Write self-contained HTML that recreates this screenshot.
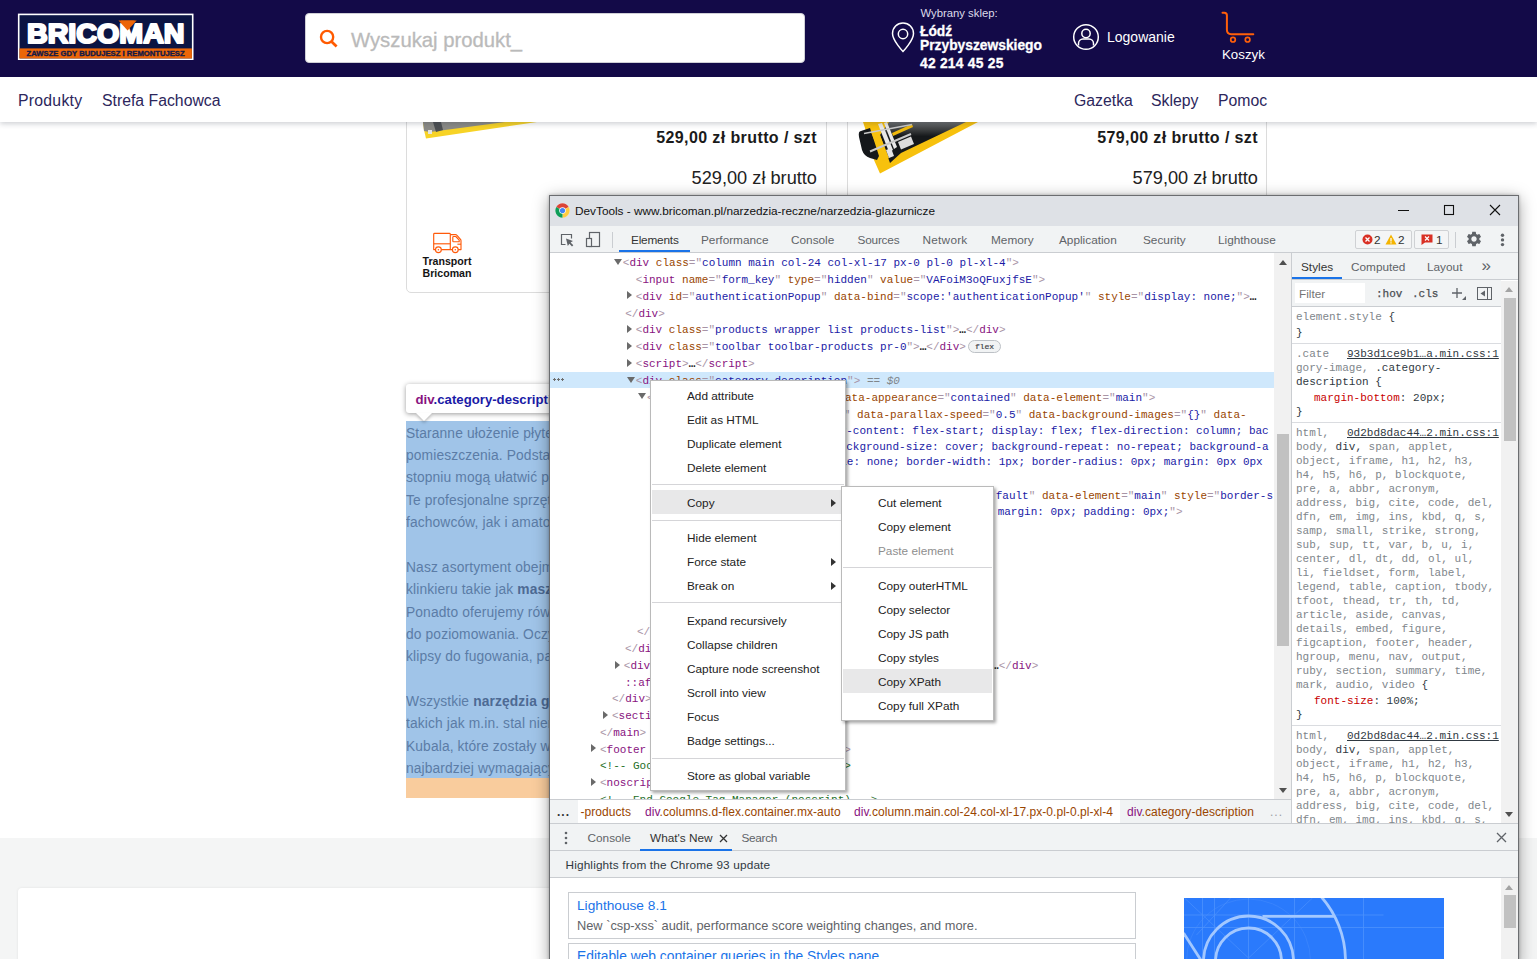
<!DOCTYPE html>
<html lang="pl">
<head>
<meta charset="utf-8">
<title>Bricoman - narzędzia glazurnicze</title>
<style>
*{box-sizing:border-box;margin:0;padding:0}
html,body{width:1537px;height:959px;overflow:hidden;background:#fff}
body{position:relative;font-family:"Liberation Sans",sans-serif;color:#1e1a4b}
.abs{position:absolute}
/* ---------- page ---------- */
#hdr{position:absolute;left:0;top:0;width:1537px;height:77px;background:#130a48}
#nav{position:absolute;left:0;top:77px;width:1537px;height:45px;background:#fff;box-shadow:0 2px 5px rgba(40,50,70,.22);z-index:3}
#nav span{position:absolute;top:15px;font-size:15.8px;color:#2c265c;white-space:nowrap;line-height:18px}
#logo{position:absolute;left:18px;top:14px;width:175px;height:46px;background:#0b1542;border:1px solid #fff}
#logo .t{position:absolute;left:7px;top:2px;font:bold 31px/32px "Liberation Sans",sans-serif;color:#fff;letter-spacing:-1.2px;transform-origin:0 0;white-space:nowrap}
#logo .o{position:absolute;left:0;right:0;bottom:0;height:9px;background:#ee6b0f}
#logo .o span{position:absolute;left:7px;top:0.5px;font:bold 7px/8px "Liberation Sans",sans-serif;color:#1a1640;white-space:nowrap;letter-spacing:.1px}
#search{position:absolute;left:305px;top:13px;width:500px;height:50px;background:#fff;border-radius:4px;border:1px solid #cfcfd6}
#search span{position:absolute;left:45px;top:14px;font-size:20.3px;line-height:24px;color:#bababa;-webkit-text-stroke:.3px #bababa;white-space:nowrap}
.hw{color:#fff;position:absolute;white-space:nowrap}
/* product cards */
.card{position:absolute;top:100px;height:193px;border:1px solid #dcdcdc;border-radius:0 0 5px 5px;background:#fff}
.pb{position:absolute;font-weight:bold;font-size:16px;line-height:18px;letter-spacing:.4px;color:#1a1a1a;white-space:nowrap;text-align:right}
.pr{position:absolute;font-size:18.2px;line-height:22px;color:#222;white-space:nowrap;text-align:right}
#desc p{position:absolute;left:0;font-size:13.8px;line-height:22px;color:#5b7ca6;white-space:nowrap;letter-spacing:.12px;margin-top:1.1px}
#desc b{color:#4d6a94}

/* ---------- devtools ---------- */
#dt{position:absolute;left:549px;top:195px;width:970px;height:771px;background:#fff;border:1px solid #6b6d70;box-shadow:0 3px 15px rgba(0,0,0,.36),0 0 3px rgba(0,0,0,.25);z-index:10;font-family:"Liberation Sans",sans-serif;font-size:12px;color:#303942}
#dtw{position:absolute;left:-550px;top:-196px;width:1537px;height:959px;overflow:hidden;pointer-events:none}
#dtw>*{position:absolute}
.ui{font-size:11.8px;line-height:14px;white-space:nowrap;color:#333}
.tab{color:#5f6368}
.ln{position:absolute;font-family:"Liberation Mono",monospace;font-size:11px;line-height:16.8px;height:16.8px;white-space:pre;color:#303942}
.t{color:#881280}.b{color:#a894a6}.an{color:#994500}.av{color:#1a1aa6}.cm{color:#236e25}
.eq{color:#80868b;font-style:italic}
.ad{position:absolute;width:0;height:0;border-left:4px solid transparent;border-right:4px solid transparent;border-top:6px solid #6a6a6a}
.ar{position:absolute;width:0;height:0;border-top:4px solid transparent;border-bottom:4px solid transparent;border-left:5.5px solid #6a6a6a}
.sel{position:absolute;background:#cfe8fc}
.dots{position:absolute;width:11px;height:3px;background:radial-gradient(circle at 1.5px 1.5px,#6e6e6e 1.1px,transparent 1.4px) 0 0/4px 3px repeat-x}
.badge{display:inline-block;font-family:"Liberation Mono",monospace;font-size:8px;line-height:11px;height:13px;padding:0 6px;margin-left:2px;border:1px solid #bdc1c6;border-radius:7px;color:#3c4043;background:#f1f3f4;vertical-align:1.5px;-webkit-text-stroke:.2px #3c4043}
.el{color:#222;font-weight:bold}
.sl{position:absolute;font-family:"Liberation Mono",monospace;font-size:11px;line-height:14px;height:14px;white-space:pre;color:#80868b}
.sl u{color:#303942}
.sl .p{color:#c80000}.sl .v{color:#303942}.sl .k{color:#303942}
.menu{background:#fff;border:1px solid #bababa;box-shadow:2px 2px 3px rgba(0,0,0,.35)}
.mi{position:absolute;font-size:11.8px;line-height:14px;color:#222;white-space:nowrap}
.bc{position:absolute;top:805px;font-size:12px;line-height:14px;white-space:nowrap;letter-spacing:.05px;color:#994500}
.bc b{font-weight:normal;color:#881280}
</style>
</head>
<body>
<!-- ================= PAGE ================= -->
<div class="card" style="left:406px;width:421px"></div>
<div class="card" style="left:847px;width:420px"></div>

<div id="page">
  <div class="pb" style="right:720px;top:129px">529,00 zł brutto / szt</div>
  <div class="pr" style="right:720px;top:167px">529,00 zł brutto</div>
  <div class="pb" style="right:279px;top:129px">579,00 zł brutto / szt</div>
  <div class="pr" style="right:279px;top:167px">579,00 zł brutto</div>
  <!-- product image fragments -->
  <svg class="abs" style="left:406px;top:122px" width="140" height="20" viewBox="406 122 140 20"><polygon points="423,122 537,122 426,138.500 424,130" fill="#f7d326"/><polygon points="423,122 505,122 430,132 424,131" fill="#8a8a86"/><polygon points="433,122 441,122 443,130 436,132" fill="#4c4f52"/><rect x="428" y="130" width="4" height="4" fill="#e4e4e4"/></svg>
  <svg class="abs" style="left:848px;top:122px" width="140" height="56" viewBox="848 122 140 56"><defs><linearGradient id="gb" x1="0" y1="0" x2="0" y2="1"><stop offset="0" stop-color="#6a6c6c"/><stop offset=".35" stop-color="#15181a"/></linearGradient></defs>
  <polygon points="863,122 978,122 880,173.500 874,160 865,128" fill="#f7c10d"/>
  <polygon points="889,122 966,122 901,153 890,163 880,135" fill="url(#gb)"/>
  <path d="M861,131 Q858,131 859,137 L862,150 Q864,156 870,158 L877,160 L879,156 L870,128 Z" fill="#14171a"/>
  <polygon points="871,132 878,130 889,158 883,161" fill="#f7c10d"/>
  <polygon points="892,133 912,124 913,127 893,136" fill="#f0b90c"/>
  <polygon points="878,124 882,123 893,150 889,152" fill="#e9e9e9"/><polygon points="884,123 887,122 897,147 894,149" fill="#e9e9e9"/>
  <path d="M864,133.500 L912,124.500" stroke="#c9c9c9" stroke-width="1.600"/><path d="M870,151.500 L911,134" stroke="#c9c9c9" stroke-width="2"/>
  <polygon points="898,142 911,136.500 914,144 901,149.500" fill="#dcdcdc"/>
  <polygon points="886,150 891,148 894,156 889,158" fill="#e4e4e4"/>
  </svg>
  <!-- transport icon -->
  <svg class="abs" style="left:430px;top:230px" width="34" height="26" viewBox="430 230 34 26"><g fill="none" stroke="#ff5a0a" stroke-width="1.150" stroke-linejoin="round"><path d="M434.600 233.400 h14.800 q.900 0 .900 .900 v15.300 h-16.600 v-15.300 q0 -.900 .900 -.900 z"/><path d="M433.700 243.800 h16.600"/><path d="M450.300 234.600 h5.200 q.800 0 1.300 .600 l3.700 4.200 q.500 .600 .500 1.300 v8.900 h-10.700"/><path d="M453.600 236.500 h2.200 l3.400 3.700 v1.500 h-5.600 q-.800 0 -.800 -.800 v-3.600 q0 -.800 .800 -.800 z"/><path d="M457.400 244.200 h3.600"/><circle cx="438.400" cy="249.700" r="2.900" fill="#fff"/><circle cx="455.300" cy="249.700" r="2.900" fill="#fff"/></g><circle cx="438.400" cy="249.700" r=".800" fill="#ff5a0a"/><circle cx="455.300" cy="249.700" r=".800" fill="#ff5a0a"/></svg>
  <div class="abs" style="left:407px;top:255px;width:80px;text-align:center;font-weight:bold;font-size:10.6px;line-height:12px;color:#141414">Transport<br>Bricoman</div>
  <!-- footer band -->
  <div class="abs" style="left:0;top:838px;width:1537px;height:121px;background:#f4f5f5"></div>
  <div class="abs" style="left:18px;top:888px;width:1500px;height:80px;background:#fff;border-radius:4px;box-shadow:0 0 3px rgba(0,0,0,.08)"></div>
  <!-- inspected element overlay -->
  <div class="abs" id="desc" style="left:406px;top:421px;width:860px;height:357px;background:#a0c4e8;overflow:hidden">
    <p style="top:0.7px">Staranne ułożenie płytek ceramicznych decyduje o wyglądzie całego</p>
    <p style="top:23.1px">pomieszczenia. Podstawowe narzędzia glazurnicze w znacznym</p>
    <p style="top:45.4px">stopniu mogą ułatwić pracę przy układaniu płytek i glazury.</p>
    <p style="top:67.8px">Te profesjonalne sprzęty przydadzą się zarówno doświadczonym</p>
    <p style="top:90.1px">fachowców, jak i amatorom remontów wykonywanych samodzielnie.</p>
    <p style="top:134.8px">Nasz asortyment obejmuje narzędzia do cięcia płytek, gresu oraz</p>
    <p style="top:157.2px">klinkieru takie jak <b>maszynki do glazury</b> i przecinarki.</p>
    <p style="top:179.5px">Ponadto oferujemy również krzyżyki, kliny oraz systemy</p>
    <p style="top:201.8px">do poziomowania. Oczywiście w ofercie znajdują się także</p>
    <p style="top:224.2px">klipsy do fugowania, pace, kielnie i mieszadła do zapraw.</p>
    <p style="top:268.9px">Wszystkie <b>narzędzia glazurnicze</b> wykonane są z materiałów</p>
    <p style="top:291.2px">takich jak m.in. stal nierdzewna. Polecamy produkty marki</p>
    <p style="top:313.6px">Kubala, które zostały wyprodukowane z myślą o</p>
    <p style="top:335.9px">najbardziej wymagających klientach i profesjonalistach.</p>
  </div>
  <div class="abs" style="left:406px;top:778px;width:860px;height:20px;background:#f9cc9d"></div>
  <!-- inspect tooltip -->
  <div class="abs" id="tip" style="left:406px;top:384px;width:330px;height:29px;background:#fff;border-radius:3px;box-shadow:0 1px 5px rgba(0,0,0,.4)">
    <span style="position:absolute;left:9.5px;top:8px;font-weight:bold;font-size:13.2px;line-height:15px;white-space:nowrap;color:#1a1aa6"><i style="font-style:normal;color:#881280">div</i>.category-description</span>
  </div>
  <div class="abs" style="left:416px;top:413px;width:0;height:0;border-left:8px solid transparent;border-right:8px solid transparent;border-top:8px solid #fff;filter:drop-shadow(0 2px 1.500px rgba(0,0,0,.25))"></div>
</div>

<div id="hdr">
  <svg id="logo2" class="abs" style="left:17px;top:13px" width="178" height="48" viewBox="17 13 178 48">
  <rect x="18.700" y="14.400" width="174" height="44.800" fill="#0b1443" stroke="#fff" stroke-width="1.600"/>
  <rect x="19.500" y="48.400" width="172.400" height="10" fill="#ec6608"/>
  <text x="27" y="42.700" font-family="Liberation Sans, sans-serif" font-weight="bold" font-size="27.600" fill="#fff" stroke="#fff" stroke-width="2.200" stroke-linejoin="round" textLength="157.500" lengthAdjust="spacingAndGlyphs">BRICOMAN</text>
  <polygon points="118.500,20.400 136.700,20.400 127.600,30.600" fill="#ec6608"/>
  <polygon points="120.500,20.400 134.700,20.400 127.600,28.600" fill="#ec6608" stroke="#0b1443" stroke-width="0"/>
  <text x="26.600" y="56" font-family="Liberation Sans, sans-serif" font-weight="bold" font-size="7" fill="#151a45" stroke="#151a45" stroke-width="0.350" textLength="158" lengthAdjust="spacingAndGlyphs">ZAWSZE GDY BUDUJESZ I REMONTUJESZ</text>
</svg>
  <div id="search"><span>Wyszukaj produkt_</span></div>
  <svg class="abs" style="left:318px;top:28px" width="22" height="22" viewBox="318 28 22 22"><circle cx="327.100" cy="37" r="6.100" fill="none" stroke="#ff5a00" stroke-width="2.400"/><path d="M331.700 41.700 L336.600 46.500" stroke="#ff5a00" stroke-width="2.700" stroke-linecap="butt"/></svg>
  <svg class="abs" style="left:890px;top:22px" width="26" height="32" viewBox="0 0 26 32"><path d="M13 29.5 C13 29.5 2.5 18.5 2.5 11.5 a10.5 10.5 0 0 1 21 0 C23.500 18.500 13 29.500 13 29.500 Z" fill="none" stroke="#fff" stroke-width="1.5"/><circle cx="13" cy="12" r="4.7" fill="none" stroke="#fff" stroke-width="1.5"/></svg>
  <div class="hw" style="left:920.5px;top:7px;font-size:11.3px;line-height:13px;color:#dddbea">Wybrany sklep:</div>
  <div class="hw" style="left:920px;top:24.5px;font-size:13.8px;line-height:14px;font-weight:bold;-webkit-text-stroke:.3px #fff">Łódź<br>Przybyszewskiego</div>
  <div class="hw" style="left:920px;top:56px;font-size:13.8px;line-height:15px;font-weight:bold;letter-spacing:.25px;-webkit-text-stroke:.3px #fff">42 214 45 25</div>
  <svg class="abs" style="left:1072px;top:23px" width="28" height="28" viewBox="0 0 28 28"><circle cx="14" cy="14" r="12.3" fill="none" stroke="#fff" stroke-width="1.5"/><circle cx="14" cy="10.5" r="4.2" fill="none" stroke="#fff" stroke-width="1.5"/><path d="M6.500 22.500 v-2 a4.500 4.500 0 0 1 4.500 -4.500 h6 a4.500 4.500 0 0 1 4.500 4.500 v2" fill="none" stroke="#fff" stroke-width="1.5"/></svg>
  <div class="hw" style="left:1107px;top:29px;font-size:14px;line-height:16px">Logowanie</div>
  <svg class="abs" style="left:1218px;top:8px" width="40" height="38" viewBox="1218 8 40 38"><path d="M1222.500 12.700 h1.800 q2.600 0 2.600 2.600 v14.500 q0 4.400 4.400 4.400 h22" fill="none" stroke="#ff5f0a" stroke-width="2" stroke-linecap="round"/><circle cx="1233" cy="39.700" r="2.300" fill="none" stroke="#ff5f0a" stroke-width="1.700"/><circle cx="1247.600" cy="39.700" r="2.300" fill="none" stroke="#ff5f0a" stroke-width="1.700"/></svg>
  <div class="hw" style="left:1222px;top:47px;font-size:13.3px;line-height:16px">Koszyk</div>
</div>
<div id="nav">
  <span style="left:18px;letter-spacing:.25px">Produkty</span>
  <span style="left:102px">Strefa Fachowca</span>
  <span style="left:1074px">Gazetka</span>
  <span style="left:1151px">Sklepy</span>
  <span style="left:1218px">Pomoc</span>
</div>
<!-- ================= DEVTOOLS ================= -->
<div id="dt"><div id="dtw">
<!-- title bar -->
<div style="left:550px;top:196px;width:968px;height:30px;background:#dee1e6"></div>
<svg style="left:554.5px;top:202.5px" width="15" height="15" viewBox="0 0 48 48"><circle cx="24" cy="24" r="23" fill="#fff"/><path d="M24 24 L4.100 12.500 A23 23 0 0 1 43.900 12.500 Z" fill="#db4437"/><path d="M24 24 L43.900 12.500 A23 23 0 0 1 24 47 Z" fill="#ffcd40"/><path d="M24 24 L24 47 A23 23 0 0 1 4.100 12.500 Z" fill="#0f9d58"/><circle cx="24" cy="24" r="10.500" fill="#fff"/><circle cx="24" cy="24" r="8.300" fill="#4285f4"/></svg>
<div class="ui" style="left:575px;top:204px;color:#111">DevTools - www.bricoman.pl/narzedzia-reczne/narzedzia-glazurnicze</div>
<svg style="left:1396px;top:203px" width="108" height="14" viewBox="0 0 108 14"><path d="M2 7.500 h11" stroke="#111" stroke-width="1"/><rect x="48.500" y="2.500" width="9" height="9" fill="none" stroke="#111" stroke-width="1.100"/><path d="M94 2 l10 10 M104 2 l-10 10" stroke="#111" stroke-width="1.100"/></svg>
<!-- main toolbar -->
<div style="left:550px;top:226px;width:968px;height:27px;background:#f1f3f4;border-bottom:1px solid #cacdd1"></div>
<svg style="left:559px;top:232px" width="16" height="16" viewBox="0 0 16 16"><path d="M12.500 6.500 v-4 h-10 v10 h4" fill="none" stroke="#5f6368" stroke-width="1.200"/><path d="M7 6.500 l1.800 7.500 1.600 -2.300 2.600 2.800 1.300 -1.300 -2.700 -2.700 2.400 -1.500 z" fill="#5f6368"/></svg>
<svg style="left:585px;top:231px" width="17" height="17" viewBox="0 0 17 17"><rect x="4.500" y="1.500" width="10" height="14" fill="none" stroke="#5f6368" stroke-width="1.200"/><rect x="1.500" y="7.500" width="5" height="8" fill="#f1f3f4" stroke="#5f6368" stroke-width="1.200"/></svg>
<div style="left:612px;top:232px;width:1px;height:16px;background:#cacdd1"></div>
<div class="ui" style="left:631px;top:233px;color:#333;letter-spacing:-.2px">Elements</div>
<div style="left:619px;top:250px;width:71px;height:2px;background:#1a73e8"></div>
<div class="ui tab" style="left:701px;top:233px">Performance</div>
<div class="ui tab" style="left:791px;top:233px">Console</div>
<div class="ui tab" style="left:857.5px;top:233px;letter-spacing:-.2px">Sources</div>
<div class="ui tab" style="left:922.5px;top:233px;letter-spacing:.25px">Network</div>
<div class="ui tab" style="left:991px;top:233px">Memory</div>
<div class="ui tab" style="left:1059px;top:233px">Application</div>
<div class="ui tab" style="left:1143px;top:233px">Security</div>
<div class="ui tab" style="left:1218px;top:233px">Lighthouse</div>
<div style="left:1355px;top:229.5px;width:57px;height:19.5px;border:1px solid #cfd1d4;border-radius:2px;background:#f4f5f6"></div>
<div style="left:1414px;top:229.5px;width:35px;height:19.5px;border:1px solid #cfd1d4;border-radius:2px;background:#f4f5f6"></div>
<svg style="left:1362px;top:234px" width="11" height="11" viewBox="0 0 11 11"><circle cx="5.500" cy="5.500" r="5" fill="#d93025"/><path d="M3.500 3.500 l4 4 M7.500 3.500 l-4 4" stroke="#fff" stroke-width="1.300"/></svg>
<div class="ui" style="left:1374px;top:233px">2</div>
<svg style="left:1385px;top:234px" width="12" height="11" viewBox="0 0 12 11"><path d="M6 0.500 L11.500 10.500 H0.500 Z" fill="#f4b400"/><path d="M6 4 v3.500 M6 8.300 v1.200" stroke="#fff" stroke-width="1.200"/></svg>
<div class="ui" style="left:1398px;top:233px">2</div>
<svg style="left:1421px;top:234px" width="12" height="11" viewBox="0 0 12 11"><path d="M0.500 0.500 h11 v8 h-7.500 l-3.500 2.500 z" fill="#d93025"/><path d="M4 2.500 l4 4 M8 2.500 l-4 4" stroke="#fff" stroke-width="1.200"/></svg>
<div class="ui" style="left:1436px;top:233px">1</div>
<div style="left:1455px;top:232px;width:1px;height:16px;background:#cacdd1"></div>
<svg style="left:1465px;top:230px" width="18" height="18" viewBox="0 0 24 24"><path fill="#5f6368" d="M19.140 12.940c.040-.300.060-.610.060-.940 0-.320-.020-.640-.070-.940l2.030-1.580a.490.490 0 0 0 .120-.610l-1.920-3.320a.488.488 0 0 0-.590-.220l-2.390.960c-.500-.380-1.030-.700-1.620-.940l-.360-2.540a.484.484 0 0 0-.480-.410h-3.840c-.240 0-.430.170-.470.410l-.360 2.540c-.590.240-1.130.570-1.620.940l-2.390-.960c-.220-.080-.470 0-.590.220L2.740 8.870c-.120.210-.080.470.120.610l2.030 1.580c-.050.300-.090.630-.090.940s.020.640.070.940l-2.030 1.580a.490.490 0 0 0-.120.610l1.920 3.320c.120.220.370.290.590.220l2.390-.960c.500.380 1.030.700 1.620.940l.360 2.540c.050.240.240.410.480.410h3.840c.240 0 .440-.170.470-.410l.360-2.540c.590-.240 1.130-.560 1.620-.940l2.390.960c.220.080.470 0 .590-.220l1.920-3.320c.120-.220.070-.470-.120-.610l-2.010-1.580zM12 15.600c-1.980 0-3.600-1.620-3.600-3.600s1.620-3.600 3.600-3.600 3.600 1.620 3.600 3.600-1.620 3.600-3.600 3.600z"/></svg>
<svg style="left:1500px;top:232.500px" width="5" height="14" viewBox="0 0 5 14"><circle cx="2.500" cy="2.200" r="1.700" fill="#5f6368"/><circle cx="2.500" cy="6.900" r="1.700" fill="#5f6368"/><circle cx="2.500" cy="11.600" r="1.700" fill="#5f6368"/></svg>
<!-- DOM tree -->
<div id="dom" style="left:550px;top:253px;width:724px;height:547px;overflow:hidden"><div style="position:absolute;left:-550px;top:-253px;width:1537px;height:959px">
<i class="ad" style="left:613.8px;top:259.20px"></i><div class="ln" style="left:622.8px;top:255.20px"><span class="b">&lt;</span><span class="t">div</span> <span class="an">class</span><span class="b">="</span><span class="av">column main col-24 col-xl-17 px-0 pl-0 pl-xl-4</span><span class="b">"</span><span class="b">&gt;</span></div>
<div class="ln" style="left:635.8px;top:271.97px"><span class="b">&lt;</span><span class="t">input</span> <span class="an">name</span><span class="b">="</span><span class="av">form_key</span><span class="b">"</span> <span class="an">type</span><span class="b">="</span><span class="av">hidden</span><span class="b">"</span> <span class="an">value</span><span class="b">="</span><span class="av">VAFoiM3oQFuxjfsE</span><span class="b">"</span><span class="b">&gt;</span></div>
<i class="ar" style="left:626.8px;top:291.45px"></i><div class="ln" style="left:635.8px;top:288.75px"><span class="b">&lt;</span><span class="t">div</span> <span class="an">id</span><span class="b">="</span><span class="av">authenticationPopup</span><span class="b">"</span> <span class="an">data&#45;bind</span><span class="b">="</span><span class="av">scope:'authenticationPopup'</span><span class="b">"</span> <span class="an">style</span><span class="b">="</span><span class="av">display: none;</span><span class="b">"</span><span class="b">&gt;</span><span class="el">…</span></div>
<div class="ln" style="left:625.2px;top:305.52px"><span class="b">&lt;/</span><span class="t">div</span><span class="b">&gt;</span></div>
<i class="ar" style="left:626.8px;top:325.00px"></i><div class="ln" style="left:635.8px;top:322.30px"><span class="b">&lt;</span><span class="t">div</span> <span class="an">class</span><span class="b">="</span><span class="av">products wrapper list products-list</span><span class="b">"</span><span class="b">&gt;</span><span class="el">…</span><span class="b">&lt;/</span><span class="t">div</span><span class="b">&gt;</span></div>
<i class="ar" style="left:626.8px;top:341.77px"></i><div class="ln" style="left:635.8px;top:339.07px"><span class="b">&lt;</span><span class="t">div</span> <span class="an">class</span><span class="b">="</span><span class="av">toolbar toolbar-products pr-0</span><span class="b">"</span><span class="b">&gt;</span><span class="el">…</span><span class="b">&lt;/</span><span class="t">div</span><span class="b">&gt;</span><span class="badge">flex</span></div>
<i class="ar" style="left:626.8px;top:358.55px"></i><div class="ln" style="left:635.8px;top:355.85px"><span class="b">&lt;</span><span class="t">script</span><span class="b">&gt;</span><span class="el">…</span><span class="b">&lt;/</span><span class="t">script</span><span class="b">&gt;</span></div>
<div class="sel" style="left:550px;top:372px;width:724px;height:16px"></div><div class="dots" style="left:553px;top:378px"></div>
<i class="ad" style="left:626.8px;top:376.62px"></i><div class="ln" style="left:635.8px;top:372.62px"><span class="b">&lt;</span><span class="t">div</span> <span class="an">class</span><span class="b">="</span><span class="av">category-description</span><span class="b">"</span><span class="b">&gt;</span><span class="eq"> == $0</span></div>
<div class="ln" style="left:646.9px;top:390.10px"><span class="b">&lt;</span><span class="t">div</span> <span class="an">data-content-type</span><span class="b">="</span><span class="av">row</span><span class="b">"</span> <span class="an">data-appearance</span><span class="b">="</span><span class="av">contained</span><span class="b">"</span> <span class="an">data-element</span><span class="b">="</span><span class="av">main</span><span class="b">"</span><span class="b">&gt;</span></div>
<i class="ad" style="left:638px;top:393.40px"></i>
<div class="ln" style="left:692.0px;top:406.87px"><span class="an">data-enable-parallax</span><span class="b">="</span><span class="av">0</span><span class="b">"</span> <span class="an">data-parallax-speed</span><span class="b">="</span><span class="av">0.5</span><span class="b">"</span> <span class="an">data-background-images</span><span class="b">="</span><span class="av">{}</span><span class="b">"</span> <span class="an">data-</span></div>
<div class="ln" style="left:687.8px;top:422.65px"><span class="av">e="image" style="justify-content: flex-start; display: flex; flex-direction: column; bac</span></div>
<div class="ln" style="left:694.4px;top:438.52px"><span class="av">-position: left top; background-size: cover; background-repeat: no-repeat; background-a</span></div>
<div class="ln" style="left:695.0px;top:454.40px"><span class="av">nt: scroll; border-style: none; border-width: 1px; border-radius: 0px; margin: 0px 0px</span></div>
<div class="ln" style="left:663.0px;top:470.77px"><span class="av">10px; padding: 10px;</span><span class="b">"&gt;</span></div>
<div class="ln" style="left:678.8px;top:487.75px"><span class="an"> lass</span><span class="b">="</span><span class="av">row-full-width-inner</span><span class="b">"</span> <span class="an">data-appearance</span><span class="b">="</span><span class="av"><span style="visibility:hidden">de</span>fault</span><span class="b">"</span> <span class="an">data-element</span><span class="b">="</span><span class="av">main</span><span class="b">"</span> <span class="an">style</span><span class="b">="</span><span class="av">border-s</span></div>
<div class="ln" style="left:661.0px;top:503.62px"><span class="av">tyle: none; border-width: 1px; border-radius: 0px; margin: 0px; padding: 0px;</span><span class="b">"&gt;</span></div>
<div class="ln" style="left:637.0px;top:624.25px"><span class="b">&lt;/</span><span class="t">div</span><span class="b">&gt;</span></div>
<div class="ln" style="left:625.0px;top:641.02px"><span class="b">&lt;/</span><span class="t">div</span><span class="b">&gt;</span></div>
<div class="ln" style="left:623.8px;top:657.80px"><span class="b">&lt;</span><span class="t">div</span> <span class="an">class</span><span class="b">="</span><span class="av">pagebuilder-column-group</span><span class="b">"</span> <span class="an">style</span><span class="b">="</span><span class="av">display: f</span></div>
<div class="ln" style="left:992.1px;top:657.80px"><span class="el">…</span><span class="b">&lt;/</span><span class="t">div</span><span class="b">&gt;</span></div>
<i class="ar" style="left:614.8px;top:660.50px"></i>
<div class="ln" style="left:625.0px;top:674.57px"><span class="t">::after</span></div>
<div class="ln" style="left:612.0px;top:691.35px"><span class="b">&lt;/</span><span class="t">div</span><span class="b">&gt;</span></div>
<i class="ar" style="left:603.0px;top:710.83px"></i><div class="ln" style="left:612.0px;top:708.12px"><span class="b">&lt;</span><span class="t">section</span> <span class="an">class</span><span class="b">="</span><span class="av">category-seo</span><span class="b">"</span><span class="b">&gt;</span><span class="el">…</span><span class="b">&lt;/</span><span class="t">section</span><span class="b">&gt;</span></div>
<div class="ln" style="left:600.0px;top:724.90px"><span class="b">&lt;/</span><span class="t">main</span><span class="b">&gt;</span></div>
<i class="ar" style="left:591.0px;top:744.38px"></i><div class="ln" style="left:600.0px;top:741.67px"><span class="b">&lt;</span><span class="t">footer</span> <span class="an">class</span><span class="b">="</span><span class="av">page-footer</span><span class="b">"</span><span class="b">&gt;</span><span class="el">…</span><span class="b">&lt;/</span><span class="t">footer</span><span class="b">&gt;</span></div>
<div class="ln" style="left:600.0px;top:758.45px"><span class="cm">&lt;!-- Google Tag Manager (noscript) --&gt;</span></div>
<i class="ar" style="left:591.0px;top:777.92px"></i><div class="ln" style="left:600.0px;top:775.22px"><span class="b">&lt;</span><span class="t">noscript</span><span class="b">&gt;</span><span class="el">…</span><span class="b">&lt;/</span><span class="t">noscript</span><span class="b">&gt;</span></div>
<div class="ln" style="left:600.0px;top:792.00px"><span class="cm">&lt;!-- End Google Tag Manager (noscript) --&gt;</span></div>
</div></div>
<!-- dom scrollbar -->
<div style="left:1274px;top:253px;width:17px;height:546px;background:#f1f1f1"></div>
<div style="left:1276.5px;top:434px;width:12px;height:212px;background:#c1c1c1"></div>
<i class="abs" style="left:1278.5px;top:260px;width:0;height:0;border-left:4px solid transparent;border-right:4px solid transparent;border-bottom:5px solid #505050"></i>
<i class="abs" style="left:1278.5px;top:787.5px;width:0;height:0;border-left:4px solid transparent;border-right:4px solid transparent;border-top:5px solid #505050"></i>
<div style="left:1291px;top:253px;width:1px;height:571px;background:#cacdd1"></div>
<div style="left:1292px;top:253px;width:226px;height:27px;background:#f1f3f4;border-bottom:1px solid #cacdd1"></div>
<div class="ui" style="left:1301px;top:260px;color:#333">Styles</div>
<div style="left:1292px;top:277px;width:50px;height:2px;background:#1a73e8"></div>
<div class="ui tab" style="left:1351px;top:260px">Computed</div>
<div class="ui tab" style="left:1427px;top:260px">Layout</div>
<div class="ui tab" style="left:1481.500px;top:258.500px;font-size:17px">»</div>
<div style="left:1292px;top:280px;width:209px;height:27px;background:#f1f3f4;border-bottom:1px solid #cacdd1"></div>
<div style="left:1295px;top:283px;width:70px;height:20px;background:#fff"></div>
<div class="ui" style="left:1299px;top:287px;color:#757575">Filter</div>
<div class="sl" style="left:1376px;top:286.500px;color:#4a4e52;-webkit-text-stroke:.25px #4a4e52">:hov</div>
<div class="sl" style="left:1412px;top:286.500px;color:#4a4e52;-webkit-text-stroke:.25px #4a4e52">.cls</div>
<svg style="left:1451px;top:287px" width="16" height="14" viewBox="0 0 16 14"><path d="M6 1 v10 M1 6 h10" stroke="#5f6368" stroke-width="1.300"/><path d="M15 9 v4 h-4 z" fill="#5f6368"/></svg>
<svg style="left:1477px;top:287px" width="15" height="13" viewBox="0 0 15 13"><rect x="0.500" y="0.500" width="14" height="12" fill="none" stroke="#5f6368"/><path d="M10.500 0.500 v12" stroke="#5f6368"/><path d="M8 3.500 v6 l-4.500 -3 z" fill="#5f6368"/></svg>
<div class="sl" style="left:1296px;top:310px">element.style <span class="k">{</span></div>
<div class="sl" style="left:1296px;top:326px"><span class="k">}</span></div>
<div style="left:1292px;top:343px;width:209px;height:1px;background:#dadce0"></div>
<div class="sl" style="left:1296px;top:347px">.cate</div>
<div class="sl" style="left:1347px;top:347px"><u>93b3d1ce9b1…a.min.css:1</u></div>
<div class="sl" style="left:1296px;top:361px">gory-image, <span class="k">.category-</span></div>
<div class="sl" style="left:1296px;top:375px"><span class="k">description {</span></div>
<div class="sl" style="left:1314px;top:391px"><span class="p">margin-bottom</span><span class="k">: 20px;</span></div>
<div class="sl" style="left:1296px;top:405px"><span class="k">}</span></div>
<div style="left:1292px;top:422px;width:209px;height:1px;background:#dadce0"></div>
<div class="sl" style="left:1296px;top:426px">html,</div>
<div class="sl" style="left:1347px;top:426px"><u>0d2bd8dac44…2.min.css:1</u></div>
<div class="sl" style="left:1296px;top:440px">body, <span class="k">div,</span> span, applet,</div>
<div class="sl" style="left:1296px;top:454px">object, iframe, h1, h2, h3,</div>
<div class="sl" style="left:1296px;top:468px">h4, h5, h6, p, blockquote,</div>
<div class="sl" style="left:1296px;top:482px">pre, a, abbr, acronym,</div>
<div class="sl" style="left:1296px;top:496px">address, big, cite, code, del,</div>
<div class="sl" style="left:1296px;top:510px">dfn, em, img, ins, kbd, q, s,</div>
<div class="sl" style="left:1296px;top:524px">samp, small, strike, strong,</div>
<div class="sl" style="left:1296px;top:538px">sub, sup, tt, var, b, u, i,</div>
<div class="sl" style="left:1296px;top:552px">center, dl, dt, dd, ol, ul,</div>
<div class="sl" style="left:1296px;top:566px">li, fieldset, form, label,</div>
<div class="sl" style="left:1296px;top:580px">legend, table, caption, tbody,</div>
<div class="sl" style="left:1296px;top:594px">tfoot, thead, tr, th, td,</div>
<div class="sl" style="left:1296px;top:608px">article, aside, canvas,</div>
<div class="sl" style="left:1296px;top:622px">details, embed, figure,</div>
<div class="sl" style="left:1296px;top:636px">figcaption, footer, header,</div>
<div class="sl" style="left:1296px;top:650px">hgroup, menu, nav, output,</div>
<div class="sl" style="left:1296px;top:664px">ruby, section, summary, time,</div>
<div class="sl" style="left:1296px;top:678px">mark, audio, video <span class="k">{</span></div>
<div class="sl" style="left:1314px;top:694px"><span class="p">font-size</span><span class="k">: 100%;</span></div>
<div class="sl" style="left:1296px;top:708px"><span class="k">}</span></div>
<div style="left:1292px;top:725px;width:209px;height:1px;background:#dadce0"></div>
<div class="sl" style="left:1296px;top:729px">html,</div>
<div class="sl" style="left:1347px;top:729px"><u>0d2bd8dac44…2.min.css:1</u></div>
<div class="sl" style="left:1296px;top:743px">body, <span class="k">div,</span> span, applet,</div>
<div class="sl" style="left:1296px;top:757px">object, iframe, h1, h2, h3,</div>
<div class="sl" style="left:1296px;top:771px">h4, h5, h6, p, blockquote,</div>
<div class="sl" style="left:1296px;top:785px">pre, a, abbr, acronym,</div>
<div class="sl" style="left:1296px;top:799px">address, big, cite, code, del,</div>
<div class="sl" style="left:1296px;top:813px">dfn, em, img, ins, kbd, q, s,</div>
<div style="left:1501px;top:281px;width:17px;height:544px;background:#f1f1f1"></div>
<div style="left:1503.500px;top:297.500px;width:12.500px;height:143px;background:#c1c1c1"></div>
<i class="abs" style="left:1505px;top:287px;width:0;height:0;border-left:4px solid transparent;border-right:4px solid transparent;border-bottom:5px solid #a3a3a3"></i>
<i class="abs" style="left:1505px;top:811.500px;width:0;height:0;border-left:4px solid transparent;border-right:4px solid transparent;border-top:5px solid #505050"></i>
<div style="left:550px;top:799px;width:741px;height:25px;background:#fff;border-top:1px solid #cacdd1"></div>
<div style="left:550px;top:800px;width:28px;height:24px;background:#f1f3f4"></div>
<div style="left:1264px;top:800px;width:27px;height:24px;background:#f1f3f4"></div>
<div style="left:1120px;top:800px;width:144px;height:24px;background:#f1f3f4"></div>
<div class="bc" style="left:557px;color:#333;font-weight:bold;letter-spacing:1px">...</div>
<div class="bc" style="left:580.5px">-products</div>
<div class="bc" style="left:645px"><b>div</b>.columns.d-flex.container.mx-auto</div>
<div class="bc" style="left:854px"><b>div</b>.column.main.col-24.col-xl-17.px-0.pl-0.pl-xl-4</div>
<div class="bc" style="left:1127px"><b>div</b>.category-description</div>
<div class="bc" style="left:1270px;color:#9aa0a6;letter-spacing:1px">...</div>
<div style="left:550px;top:823px;width:968px;height:28px;background:#f1f3f4;border-top:1px solid #cacdd1;border-bottom:1px solid #cacdd1"></div>
<svg style="left:564px;top:831px" width="4" height="14" viewBox="0 0 4 14"><circle cx="2" cy="2" r="1.300" fill="#5f6368"/><circle cx="2" cy="7" r="1.300" fill="#5f6368"/><circle cx="2" cy="12" r="1.300" fill="#5f6368"/></svg>
<div class="ui tab" style="left:587.5px;top:831px">Console</div>
<div class="ui" style="left:650px;top:831px;color:#333">What's New</div>
<svg style="left:719px;top:833.500px" width="9" height="9" viewBox="0 0 9 9"><path d="M1 1 l7 7 M8 1 l-7 7" stroke="#333" stroke-width="1.300"/></svg>
<div style="left:640px;top:848.500px;width:92px;height:2px;background:#1a73e8"></div>
<div class="ui tab" style="left:741.5px;top:831px;letter-spacing:-.3px">Search</div>
<svg style="left:1496px;top:831.500px" width="11" height="11" viewBox="0 0 11 11"><path d="M1 1 l9 9 M10 1 l-9 9" stroke="#5f6368" stroke-width="1.300"/></svg>
<div style="left:550px;top:851px;width:968px;height:27px;background:#f1f3f4;border-bottom:1px solid #cacdd1"></div>
<div class="ui" style="left:565.500px;top:858px;color:#303942;letter-spacing:.15px">Highlights from the Chrome 93 update</div>
<div style="left:550px;top:878px;width:951px;height:81px;background:#fff"></div>
<div style="left:568px;top:892px;width:568px;height:47px;border:1px solid #cacdd1"></div>
<div style="left:577px;top:898px;font-size:13.700px;line-height:16px;color:#1a73e8;white-space:nowrap">Lighthouse 8.1</div>
<div style="left:577px;top:917.700px;font-size:12.800px;line-height:15px;color:#5f6368;white-space:nowrap">New `csp-xss` audit, performance score weighting changes, and more.</div>
<div style="left:568px;top:943px;width:568px;height:48px;border:1px solid #cacdd1"></div>
<div style="left:577px;top:948.800px;font-size:13.800px;line-height:16px;color:#1a73e8;white-space:nowrap">Editable web container queries in the Styles pane</div>
<svg style="left:1183.500px;top:898px" width="260.500" height="61" viewBox="1183.500 898 260.500 61"><rect x="1183.500" y="898" width="261" height="61" fill="#2a7afc"/><g stroke="#4d92fd" stroke-width="0.800" fill="none"><path d="M1248 898 v61 M1214 898 v61 M1202 898 v61 M1294 898 v61 M1363 898 v61 M1183 915 h200 M1183 927.500 h261"/><path d="M1184 898 L1248 958 L1312 898 M1196 935 L1230 898" stroke-opacity=".8"/><circle cx="1248" cy="961" r="62" stroke-opacity=".5"/></g><g fill="none" stroke="#a3c8ff" stroke-width="2.800"><circle cx="1248" cy="961" r="97"/><circle cx="1248" cy="961" r="45"/><circle cx="1248" cy="961" r="33"/><path d="M1262 916.300 H1334"/><path d="M1183 933 L1201 961"/></g></svg>
<div style="left:1501px;top:878px;width:17px;height:81px;background:#f1f1f1"></div>
<div style="left:1503.500px;top:895px;width:12px;height:33px;background:#c1c1c1"></div>
<i class="abs" style="left:1505px;top:885px;width:0;height:0;border-left:4px solid transparent;border-right:4px solid transparent;border-bottom:5px solid #a3a3a3"></i>
<div class="menu" style="left:650px;top:380px;width:196px;height:411px"></div>
<div style="left:652px;top:490px;width:192px;height:24px;background:#e8e8e9"></div>
<div class="mi" style="left:687px;top:389px">Add attribute</div>
<div class="mi" style="left:687px;top:413px">Edit as HTML</div>
<div class="mi" style="left:687px;top:437px">Duplicate element</div>
<div class="mi" style="left:687px;top:461px">Delete element</div>
<div class="mi" style="left:687px;top:496px">Copy</div>
<div class="mi" style="left:687px;top:531px">Hide element</div>
<div class="mi" style="left:687px;top:555px">Force state</div>
<div class="mi" style="left:687px;top:579px">Break on</div>
<div class="mi" style="left:687px;top:614px">Expand recursively</div>
<div class="mi" style="left:687px;top:638px">Collapse children</div>
<div class="mi" style="left:687px;top:662px">Capture node screenshot</div>
<div class="mi" style="left:687px;top:686px">Scroll into view</div>
<div class="mi" style="left:687px;top:710px">Focus</div>
<div class="mi" style="left:687px;top:734px">Badge settings...</div>
<div class="mi" style="left:687px;top:769px">Store as global variable</div>
<div style="left:652px;top:484px;width:192px;height:1px;background:#d5d5d8"></div>
<div style="left:652px;top:519.5px;width:192px;height:1px;background:#d5d5d8"></div>
<div style="left:652px;top:602px;width:192px;height:1px;background:#d5d5d8"></div>
<div style="left:652px;top:757.5px;width:192px;height:1px;background:#d5d5d8"></div>
<i class="abs" style="left:830.5px;top:499px;width:0;height:0;border-top:4px solid transparent;border-bottom:4px solid transparent;border-left:5px solid #333"></i>
<i class="abs" style="left:830.5px;top:558px;width:0;height:0;border-top:4px solid transparent;border-bottom:4px solid transparent;border-left:5px solid #333"></i>
<i class="abs" style="left:830.5px;top:582px;width:0;height:0;border-top:4px solid transparent;border-bottom:4px solid transparent;border-left:5px solid #333"></i>
<div class="menu" style="left:841px;top:486px;width:153px;height:235px"></div>
<div style="left:843px;top:669px;width:149px;height:24px;background:#e8e8e9"></div>
<div class="mi" style="left:878px;top:496px">Cut element</div>
<div class="mi" style="left:878px;top:520px">Copy element</div>
<div class="mi" style="left:878px;top:544px;color:#8e8e8e">Paste element</div>
<div class="mi" style="left:878px;top:579px">Copy outerHTML</div>
<div class="mi" style="left:878px;top:603px">Copy selector</div>
<div class="mi" style="left:878px;top:627px">Copy JS path</div>
<div class="mi" style="left:878px;top:651px">Copy styles</div>
<div class="mi" style="left:878px;top:675px">Copy XPath</div>
<div class="mi" style="left:878px;top:699px">Copy full XPath</div>
<div style="left:843px;top:567px;width:149px;height:1px;background:#d5d5d8"></div>
</div></div>

</body>
</html>
